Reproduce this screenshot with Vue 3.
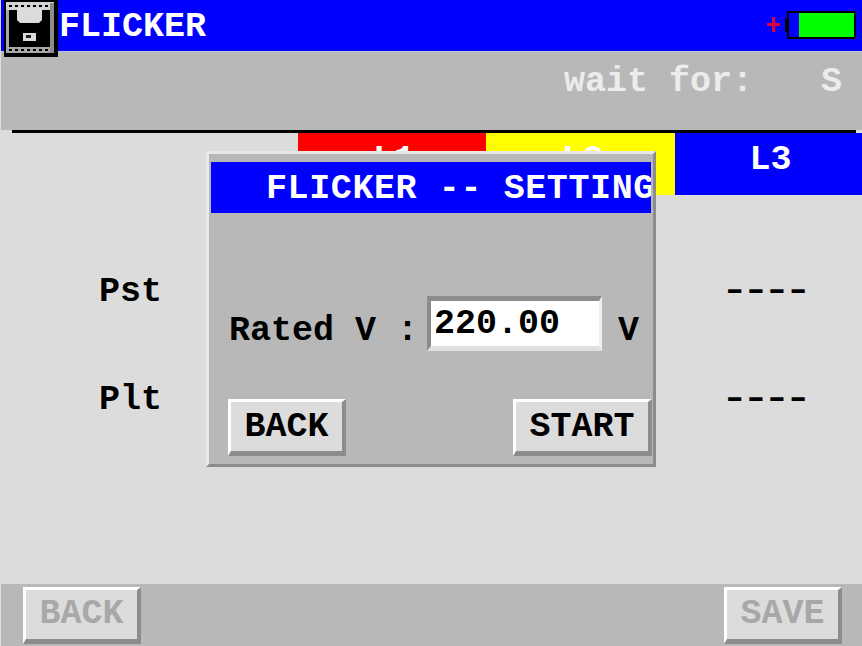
<template>
  <div class="screen">
    <header class="title-bar">
      <svg class="disk" width="54" height="57" viewBox="0 0 54 57">
        <rect width="54" height="57" fill="#000" />
        <rect x="2" y="2" width="48" height="51" fill="#a8a8a8" />
        <rect x="2" y="2" width="48" height="8" fill="#d4d4d4" />
        <rect x="5" y="10" width="41" height="37" fill="#000" />
        <rect x="46" y="3" width="4" height="50" fill="#8c8c8c" />
        <path d="M13 8H38V20L35 23H16L13 20Z" fill="#dcdcdc" />
        <rect x="19" y="33" width="13" height="8" fill="#dcdcdc" />
        <rect x="22" y="35" width="5" height="3" fill="#222" />
        <path d="M5 5h3v2H5zM11 5h3v2h-3zM17 5h3v2h-3zM23 5h3v2h-3zM29 5h3v2h-3zM35 5h3v2h-3zM41 5h3v2h-3z" fill="#000" />
        <path d="M5 49h3v2H5zM11 49h3v2h-3zM17 49h3v2h-3zM23 49h3v2h-3zM29 49h3v2h-3zM35 49h3v2h-3zM41 49h3v2h-3z" fill="#000" />
      </svg>
      <span class="title-text">FLICKER</span>
      <svg class="battery" width="90" height="30" viewBox="0 0 90 30">
        <path d="M1 13h5V7h3v6h5v3H9v6H6v-6H1z" fill="#e0003a" />
        <rect x="19" y="8" width="3" height="14" fill="#000" />
        <rect x="21" y="1" width="69" height="28" fill="#000" />
        <rect x="23" y="3" width="10" height="24" fill="#0000ff" />
        <rect x="33" y="3" width="55" height="24" fill="#00ff00" />
      </svg>
    </header>

    <div class="status-bar">
      <span>wait for:</span>
      <span class="status-unit">S</span>
    </div>
    <div class="rule"></div>

    <main class="table">
      <div class="phase-row">
        <div></div>
        <div v-for="tab in tabs" :key="tab.label" class="phase" :class="tab.cls">{{ tab.label }}</div>
      </div>
      <div v-for="row in rows" :key="row" class="data-row">
        <span class="data-label">{{ row }}</span>
        <span class="data-value">----</span>
      </div>
    </main>

    <footer class="bottom-bar">
      <button class="btn btn-back" disabled>BACK</button>
      <button class="btn btn-save" disabled>SAVE</button>
    </footer>

    <section class="dialog">
      <div class="dialog-title">FLICKER -- SETTING</div>
      <div class="form-row">
        <span class="form-label">Rated V :</span>
        <div class="input">220.00</div>
        <span class="form-unit">V</span>
      </div>
      <div class="dialog-actions">
        <button class="btn active">BACK</button>
        <button class="btn active btn-start">START</button>
      </div>
    </section>
  </div>
</template>

<script setup>
const tabs = [
  { label: 'L1', cls: 'red' },
  { label: 'L2', cls: 'yellow' },
  { label: 'L3', cls: 'blue' }
]

const rows = ['Pst', 'Plt']
</script>

<style>
html,
body {
  margin: 0;
  background: #dcdcdc;
}
</style>

<style scoped>
.screen {
  position: relative;
  display: flex;
  flex-direction: column;
  width: 862px;
  height: 646px;
  overflow: hidden;
  background: #dcdcdc;
  color: #000;
  font-family: "Liberation Mono", monospace;
  font-size: 35px;
  font-weight: 700;
  line-height: 40px;
}

.title-bar {
  position: relative;
  display: flex;
  align-items: center;
  justify-content: space-between;
  height: 51px;
  margin-left: 1px;
  padding-left: 58px;
  background: #0000ff;
  color: #fff;
  box-sizing: border-box;
}

.title-text {
  margin-top: 3px;
}

.disk {
  position: absolute;
  top: 0;
  left: 3px;
}

.battery {
  margin-right: 6px;
  margin-top: -1px;
}

.status-bar {
  display: flex;
  justify-content: flex-end;
  gap: 68px;
  height: 79px;
  margin-left: 1px;
  padding: 10px 20px 0 0;
  box-sizing: border-box;
  background: #b8b8b8;
  border-top: 1px solid #c4c4dc;
  color: #ececec;
}

.rule {
  height: 3px;
  margin: 0 6px 0 12px;
  background: #000;
}

.table {
  flex: 1;
}

.phase-row {
  display: grid;
  grid-template-columns: 298px 188px 189px 187px;
  height: 62px;
  margin-bottom: 42px;
}

.phase {
  padding-top: 7px;
  padding-left: 4px;
  text-align: center;
}

.red {
  background: #ff0000;
  color: #fff;
}

.yellow {
  background: #ffff00;
  color: #fff;
}

.blue {
  background: #0000ff;
  color: #fff;
}

.data-row {
  display: flex;
  justify-content: space-between;
  height: 108px;
  padding: 35px 57px 0 99px;
  box-sizing: border-box;
}

.data-value {
  font-size: 48px;
  font-weight: 400;
  letter-spacing: -7.6px;
  margin-top: -1px;
}

.bottom-bar {
  display: flex;
  align-items: center;
  justify-content: space-between;
  height: 62px;
  margin-left: 1px;
  padding: 0 20px 0 22px;
  box-sizing: border-box;
  background: #b8b8b8;
}

.btn {
  width: 118px;
  height: 57px;
  padding: 0;
  border-style: solid;
  border-width: 3px 4px 5px 3px;
  border-color: #fff #8c8c8c #8c8c8c #fff;
  border-radius: 0;
  background: #dcdcdc;
  color: #a8a8a8;
  font: inherit;
}

.active {
  color: #000;
}

.dialog {
  position: absolute;
  top: 151px;
  left: 206px;
  display: flex;
  flex-direction: column;
  width: 450px;
  height: 316px;
  padding: 8px 2px 8px;
  box-sizing: border-box;
  border-style: solid;
  border-width: 3px;
  border-color: #e8e8e8 #8c8c8c #8c8c8c #e8e8e8;
  background: #b8b8b8;
}

.dialog-title {
  height: 52px;
  padding: 7px 0 0 55px;
  box-sizing: border-box;
  overflow: hidden;
  background: #0000ff;
  color: #fff;
  letter-spacing: 0.6px;
  white-space: nowrap;
}

.form-row {
  display: flex;
  align-items: center;
  margin-top: 83px;
  padding-left: 18px;
}

.form-label {
  width: 198px;
  padding-top: 14px;
}

.input {
  width: 175px;
  height: 55px;
  padding: 3px 0 0 3px;
  box-sizing: border-box;
  border-style: solid;
  border-width: 5px 3px 5px 4px;
  border-color: #8c8c8c #eeeeee #e0e0e0 #8c8c8c;
  background: #fff;
}

.form-unit {
  margin-left: 16px;
  padding-top: 14px;
}

.dialog-actions {
  display: flex;
  justify-content: space-between;
  margin-top: 48px;
  margin-right: -1px;
  padding-left: 17px;
}

.btn-start {
  width: 139px;
}
</style>
